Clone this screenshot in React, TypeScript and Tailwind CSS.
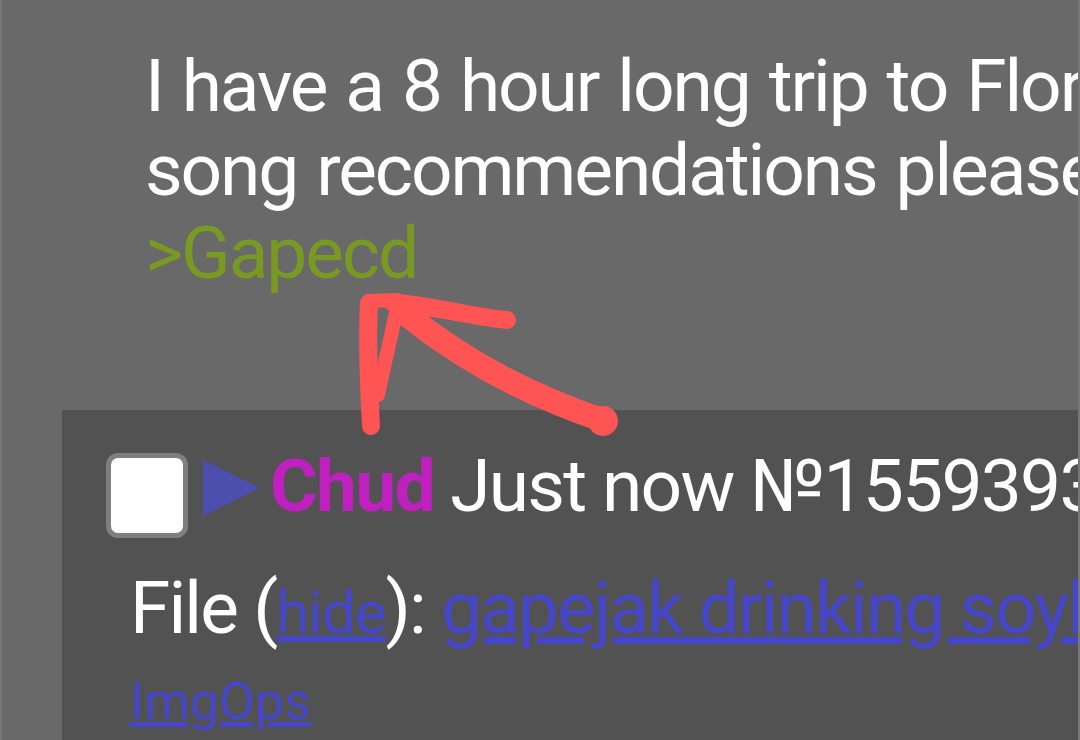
export default function App() {
  return (
    <div
      className="relative w-[1080px] h-[740px] overflow-hidden bg-[#696969] border-x-2 border-[#777777] text-white whitespace-nowrap"
      style={{fontFamily: 'Roboto, "Noto Sans", sans-serif'}}
    >
      {/* post body */}
      <div className="pt-[45px] pl-[143px] text-[73px] leading-[83.5px] tracking-[-2.1px] [word-spacing:3px]">
        <div>I have a 8 hour long trip to Florida tomorrow</div>
        <div>song recommendations please</div>
        <div className="text-[#789922]">&gt;Gapecd</div>
      </div>

      {/* reply */}
      <div className="mt-[114px] ml-[60px] h-[400px] bg-[#525252] pt-[35px] pl-[44px]">
        <div className="flex items-start">
          <div className="mt-[8px] w-[82px] h-[85px] rounded-[12px] border-[5px] border-[#7f7f7f] bg-white shrink-0" />
          <svg className="ml-[15px] mt-[15px] shrink-0" width="57" height="56" viewBox="0 0 57 56">
            <polygon points="0,0 57,28 0,56" fill="#4c4fad" />
          </svg>
          <div className="ml-[10px] text-[73px] leading-[83.5px] tracking-[-1.7px]">
            <span className="font-bold text-[#c020c0]">Chud</span> Just now №155939312
          </div>
        </div>
        <div className="mt-[29px] pl-[24px] text-[73px] leading-[83.5px] tracking-[-1.9px]">
          File (<span className="text-[60px] tracking-[-1px] text-[#4646c8] underline">hide</span>):{' '}
          <span className="text-[#4646c8] underline">gapejak drinking soylent.png</span>
        </div>
        <div className="mt-[18px] pl-[24px] text-[52px] leading-[60px]">
          <span className="text-[#4646c8] underline">ImgOps</span>
        </div>
      </div>

      {/* red marker arrow drawn on top */}
      <svg
        className="absolute left-0 top-0 pointer-events-none"
        width="1080"
        height="740"
        viewBox="0 0 1080 740"
      >
        <g fill="none" stroke="#ff5454" strokeLinecap="round" strokeLinejoin="round">
          <path d="M369 426 C367 390 365 340 367 303" strokeWidth="18" />
          <path d="M367 301 L394 300" strokeWidth="14" />
          <path d="M396 302 C391 330 383 360 376 395" strokeWidth="14" />
          <path d="M390 302 C440 308 480 318 505 320" strokeWidth="18" />
          <path d="M405 315 Q488 382 600 420" strokeWidth="24" />
        </g>
        <circle cx="601" cy="421" r="15" fill="#ff5454" />
      </svg>
    </div>
  );
}
